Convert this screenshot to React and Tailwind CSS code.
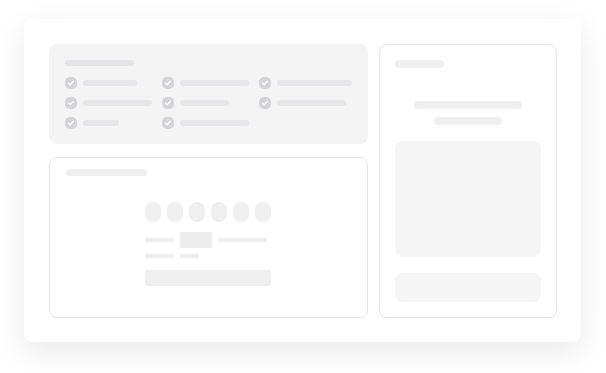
import React from "react";

function Check() {
  return (
    <div className="w-[12px] h-[12px] rounded-[5px] bg-[#d4d4d8] flex items-center justify-center shrink-0">
      <svg width="8" height="8" viewBox="0 0 8 8" fill="none">
        <path d="M1.6 4.2 L3.3 5.8 L6.4 2.3" stroke="#fff" strokeWidth="1.3" strokeLinecap="round" strokeLinejoin="round" />
      </svg>
    </div>
  );
}

function Item({ w }) {
  return (
    <div className="flex items-center gap-[6px] h-[12px]">
      <Check />
      <div className="h-[6px] rounded-full bg-[#e6e6e8]" style={{ width: w }} />
    </div>
  );
}

export default function App() {
  const items = [54, 69, 75, 69, 49, 69, 36, 69];
  return (
    <div className="w-[606px] h-[373px] bg-white pt-[19px] pl-[24px]">
      <div className="w-[557px] h-[323px] bg-white rounded-[8px] shadow-[0_10px_32px_rgba(0,0,0,0.09)] pt-[25px] pl-[25px] pr-[24px] pb-[24px] flex gap-[11px]">
        <div className="w-[319px] flex flex-col gap-[13px]">
          <div className="h-[100px] rounded-[8px] bg-[#f4f4f5] pt-[16px] pl-[16px]">
            <div className="w-[69px] h-[6px] rounded-full bg-[#e4e4e7]" />
            <div className="mt-[11px] grid grid-cols-[97px_97px_97px] gap-y-[8px]">
              {items.map((w, i) => (
                <Item key={i} w={w} />
              ))}
            </div>
          </div>
          <div className="flex-1 rounded-[8px] border border-[#e4e4e7] bg-white pt-[11px] pl-[16px] flex flex-col">
            <div className="w-[81px] h-[7px] rounded-full bg-[#efeff0]" />
            <div className="mt-[26px] ml-[79px] w-[126px] flex flex-col">
              <div className="flex gap-[6px]">
                {[0, 1, 2, 3, 4, 5].map((i) => (
                  <div key={i} className="w-[16px] h-[20px] rounded-[8px] bg-[#efefef]" />
                ))}
              </div>
              <div className="mt-[10px] flex items-center gap-[6px] h-[16px]">
                <div className="w-[29px] h-[4px] rounded-full bg-[#ededed]" />
                <div className="w-[32px] h-[16px] bg-[#ededed]" />
                <div className="w-[49px] h-[4px] rounded-full bg-[#ededed]" />
              </div>
              <div className="mt-[6px] flex items-center gap-[6px] h-[4px]">
                <div className="w-[29px] h-[4px] rounded-full bg-[#ededed]" />
                <div className="w-[19px] h-[4px] rounded-full bg-[#ededed]" />
              </div>
              <div className="mt-[12px] w-[126px] h-[16px] rounded-[2px] bg-[#efefef]" />
            </div>
          </div>
        </div>
        <div className="w-[178px] rounded-[8px] border border-[#e4e4e7] bg-white pt-[15px] px-[15px] flex flex-col">
          <div className="w-[49px] h-[8px] rounded-full bg-[#efeff0]" />
          <div className="mt-[33px] flex flex-col items-center gap-[8px]">
            <div className="w-[108px] h-[8px] rounded-full bg-[#efeff0]" />
            <div className="w-[68px] h-[8px] rounded-full bg-[#efeff0]" />
          </div>
          <div className="mt-[16px] h-[116px] rounded-[8px] bg-[#f5f5f6]" />
          <div className="mt-[16px] h-[29px] rounded-[8px] bg-[#f5f5f6]" />
        </div>
      </div>
    </div>
  );
}
